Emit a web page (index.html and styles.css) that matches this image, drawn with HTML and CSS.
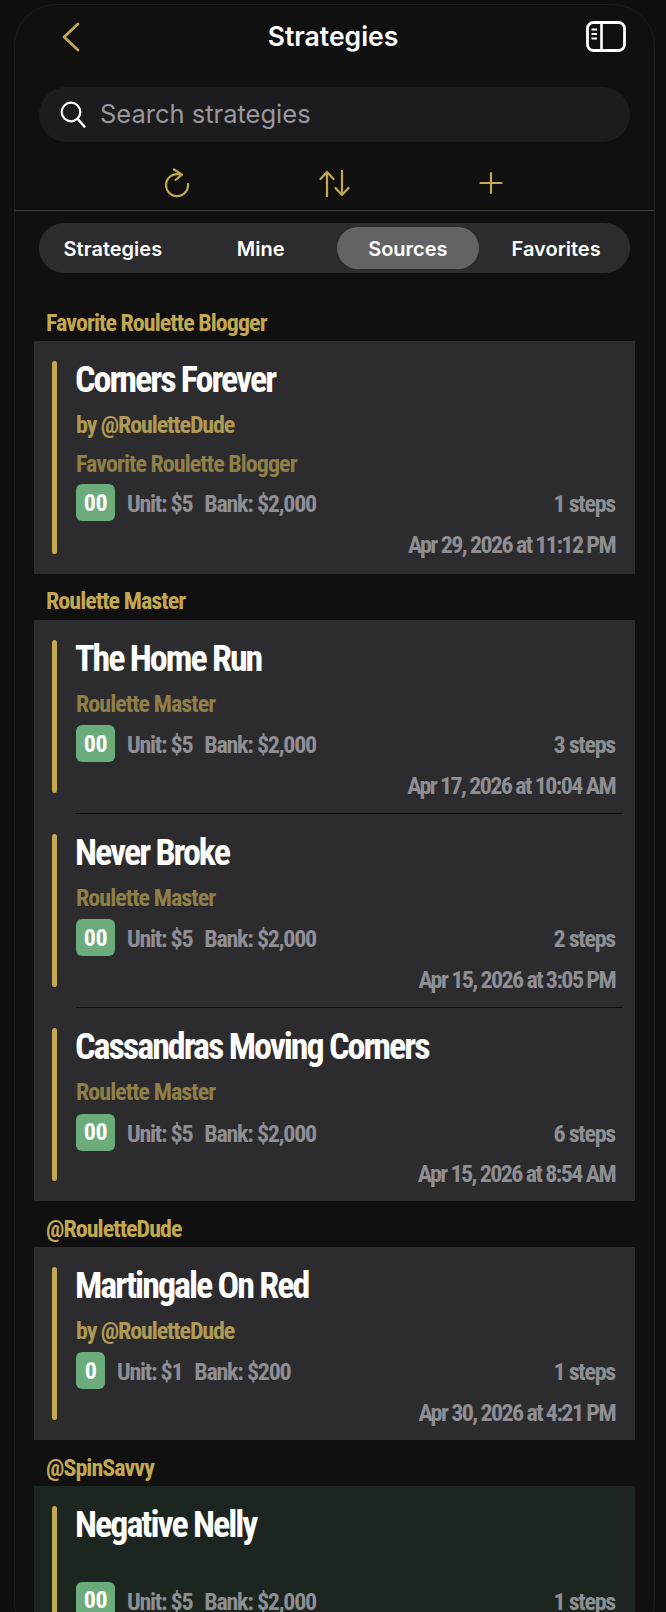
FILE: index.html
```html
<!DOCTYPE html>
<html lang="en">
<head>
<meta charset="utf-8">
<title>Strategies</title>
<link rel="stylesheet" href="styles.css">
</head>
<body>
<div class="frame">
  <header class="nav">
    <svg class="nav-back" width="18" height="30" viewBox="0 0 18 30"><path d="M16 2 2 15l14 13" fill="none" stroke="#c2a850" stroke-width="2.8" stroke-linecap="round" stroke-linejoin="round"/></svg>
    <h1 class="nav-title">Strategies</h1>
    <svg class="nav-panel" width="40" height="31" viewBox="0 0 40 31"><rect x="1.500" y="1.500" width="37" height="28" rx="6" fill="none" stroke="#fff" stroke-width="2.800"/><path d="M15.500 1.500v28" stroke="#fff" stroke-width="2.600"/><path d="M5.500 8.500h5.500M5.500 13h5.500M5.500 17.500h5.500" stroke="#fff" stroke-width="2.200"/></svg>
  </header>
  <div class="search">
    <svg width="26" height="27" viewBox="0 0 26 27"><circle cx="11" cy="11" r="9.300" fill="none" stroke="#fff" stroke-width="2.200"/><path d="m17.800 18 6.600 7.600" stroke="#fff" stroke-width="2.400" stroke-linecap="round"/></svg>
    <span class="search-text">Search strategies</span>
  </div>
  <div class="actions">
    <svg width="26" height="30" viewBox="0 0 26 30"><path d="M15 6.500A11 11 0 1 0 23 16" fill="none" stroke="#c2a850" stroke-width="2.200" stroke-linecap="round"/><path d="M9 1.500l8 5.200L10.500 12" fill="none" stroke="#c2a850" stroke-width="2.200" stroke-linecap="round" stroke-linejoin="round"/></svg>
    <svg width="32" height="27" viewBox="0 0 32 27"><path d="M8 26V2M1.500 9 8 2l6.500 7M23 1v24M16.500 18l6.500 7 6.500-7" fill="none" stroke="#c2a850" stroke-width="2.200" stroke-linecap="round" stroke-linejoin="round"/></svg>
    <svg width="24" height="24" viewBox="0 0 24 24"><path d="M12 2v20M1.500 12h21" fill="none" stroke="#c2a850" stroke-width="2.200" stroke-linecap="round"/></svg>
  </div>
  <div class="divider"></div>
  <nav class="tabs">
    <span class="tab">Strategies</span>
    <span class="tab">Mine</span>
    <span class="tab tab-active">Sources</span>
    <span class="tab">Favorites</span>
  </nav>
  <main class="list">
    <h2 class="group">Favorite Roulette Blogger</h2>
    <section class="card">
      <article class="row">
        <div class="bar"></div>
        <div class="body">
          <div class="title">Corners Forever</div>
          <div class="by">by @RouletteDude</div>
          <div class="source">Favorite Roulette Blogger</div>
          <div class="meta"><span class="chip">00</span><span class="info">Unit: $5</span><span class="info">Bank: $2,000</span><span class="steps">1 steps</span></div>
          <div class="date">Apr 29, 2026 at 11:12 PM</div>
        </div>
      </article>
    </section>
    <h2 class="group">Roulette Master</h2>
    <section class="card">
      <article class="row">
        <div class="bar"></div>
        <div class="body">
          <div class="title">The Home Run</div>
          <div class="source">Roulette Master</div>
          <div class="meta"><span class="chip">00</span><span class="info">Unit: $5</span><span class="info">Bank: $2,000</span><span class="steps">3 steps</span></div>
          <div class="date">Apr 17, 2026 at 10:04 AM</div>
        </div>
      </article>
      <div class="rule"></div>
      <article class="row">
        <div class="bar"></div>
        <div class="body">
          <div class="title">Never Broke</div>
          <div class="source">Roulette Master</div>
          <div class="meta"><span class="chip">00</span><span class="info">Unit: $5</span><span class="info">Bank: $2,000</span><span class="steps">2 steps</span></div>
          <div class="date">Apr 15, 2026 at 3:05 PM</div>
        </div>
      </article>
      <div class="rule"></div>
      <article class="row">
        <div class="bar"></div>
        <div class="body">
          <div class="title">Cassandras Moving Corners</div>
          <div class="source">Roulette Master</div>
          <div class="meta"><span class="chip">00</span><span class="info">Unit: $5</span><span class="info">Bank: $2,000</span><span class="steps">6 steps</span></div>
          <div class="date">Apr 15, 2026 at 8:54 AM</div>
        </div>
      </article>
    </section>
    <h2 class="group">@RouletteDude</h2>
    <section class="card">
      <article class="row">
        <div class="bar"></div>
        <div class="body">
          <div class="title">Martingale On Red</div>
          <div class="by">by @RouletteDude</div>
          <div class="meta"><span class="chip chip-small">0</span><span class="info">Unit: $1</span><span class="info">Bank: $200</span><span class="steps">1 steps</span></div>
          <div class="date">Apr 30, 2026 at 4:21 PM</div>
        </div>
      </article>
    </section>
    <h2 class="group">@SpinSavvy</h2>
    <section class="card card-green">
      <article class="row row-last">
        <div class="bar"></div>
        <div class="body">
          <div class="title">Negative Nelly</div>
          <div class="spacer"></div>
          <div class="meta"><span class="chip">00</span><span class="info">Unit: $5</span><span class="info">Bank: $2,000</span><span class="steps">1 steps</span></div>
        </div>
      </article>
    </section>
  </main>
</div>
</body>
</html>
```
FILE: styles.css
```css
* { box-sizing: border-box; margin: 0; padding: 0; }
html, body { height: 1612px; overflow: hidden; background: #0f0f0f; }
body { padding: 4px 11px 0 14px; font-family: Roboto, sans-serif; font-stretch: 75%; }
.frame { height: 1640px; overflow: hidden; background: #101010; border: 1px solid #1c1c1c; border-radius: 42px; }
.nav { display: flex; align-items: center; justify-content: space-between; height: 60px; padding: 5px 28px 0 47px; margin-top: -1px; }
.nav-title { font: 600 26.500px/1 Inter, sans-serif; color: #fff; }
.nav-back, .nav-panel { flex: none; }
.search { display: flex; align-items: center; gap: 14px; height: 55px; margin: 23px 24px 0; padding: 0 21px; border-radius: 28px; background: #1c1c1e; }
.search-text { margin-top: -2px; font: 400 25.500px/1 Inter, sans-serif; color: #98989d; }
.actions { display: flex; align-items: center; height: 40px; margin-top: 21px; padding: 0 151.500px 0 150px; justify-content: space-between; }
.divider { height: 1px; margin-top: 7px; background: #3a3a3c; }
.tabs { display: grid; grid-template-columns: repeat(4, 1fr); height: 50px; margin: 12px 24px 0; padding: 4px 0; border-radius: 25px; background: #2c2c2e; }
.tab { display: flex; align-items: center; justify-content: center; padding-top: 1px; border-radius: 21px; font: 600 20px/1 Inter, sans-serif; color: #fff; }
.tab-active { margin: 0 3px 0 2px; background: #636366; }
.list { margin: 22.500px 19px 0; }
.group { display: flex; align-items: center; height: 45.500px; padding: 9px 0 0 12px; font-size: 24px; font-weight: 700; letter-spacing: -0.950px; color: #c2a850; }
.card { background: #2c2c2e; }
.card-green { background: #1c251f; }
.row { display: flex; gap: 19px; padding: 20px 20px 20px 18px; }
.rule { height: 1px; margin: 0 12px 0 42px; background: #0f0f0f; }
.bar { flex: none; width: 5px; border-radius: 3px; background: #c2a850; }
.body { flex: 1; min-width: 0; }
.row-last .body { padding-bottom: 40px; }
.title { height: 45px; margin-left: -1px; font-size: 36px; line-height: 39px; font-weight: 700; letter-spacing: -2px; color: #fff; }
.by { height: 37px; font-size: 24px; line-height: 39px; font-weight: 700; letter-spacing: -1.100px; color: #ae9a54; }
.source { height: 37px; font-size: 24px; line-height: 39px; font-weight: 700; letter-spacing: -0.950px; color: #8f7f48; }
.by + .source { margin-top: 1.500px; }
.spacer { height: 27.500px; }
.meta { display: flex; align-items: center; height: 37px; margin-top: 3.500px; gap: 12px; font-size: 24px; font-weight: 700; letter-spacing: -1.250px; color: #8e8e93; }
.by + .source + .meta { margin-top: 2.500px; }
.info, .steps { padding-top: 3px; }
.chip { display: flex; align-items: center; justify-content: center; width: 39px; height: 37px; border-radius: 6px; background: #6bab7c; font-size: 24px; letter-spacing: -0.500px; color: #fff; }
.chip-small { width: 29px; }
.steps { margin-left: auto; }
.date { height: 30.830px; padding-top: 11.500px; text-align: right; font-size: 24px; line-height: 24px; font-weight: 700; letter-spacing: -1.600px; color: #8e8e93; }
.by + .source + .meta + .date { height: 33px; padding-top: 12px; }
```
